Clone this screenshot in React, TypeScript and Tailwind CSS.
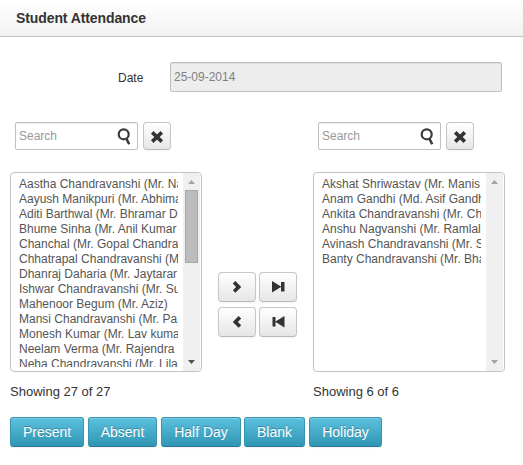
import type { ReactNode } from 'react';

const available = [
  'Aastha Chandravanshi (Mr. Na',
  'Aayush Manikpuri (Mr. Abhima',
  'Aditi Barthwal (Mr. Bhramar D',
  'Bhume Sinha (Mr. Anil Kumar',
  'Chanchal (Mr. Gopal Chandra',
  'Chhatrapal Chandravanshi (M',
  'Dhanraj Daharia (Mr. Jaytarar',
  'Ishwar Chandravanshi (Mr. Su',
  'Mahenoor Begum (Mr. Aziz)',
  'Mansi Chandravanshi (Mr. Pa',
  'Monesh Kumar (Mr. Lav kuma',
  'Neelam Verma (Mr. Rajendra',
  'Neha Chandravanshi (Mr. Lila',
];

const selected = [
  'Akshat Shriwastav (Mr. Manis',
  'Anam Gandhi (Md. Asif Gandh',
  'Ankita Chandravanshi (Mr. Ch',
  'Anshu Nagvanshi (Mr. Ramlal',
  'Avinash Chandravanshi (Mr. S',
  'Banty Chandravanshi (Mr. Bha',
];

const actions = [
  { label: 'Present', width: 'w-[74px] mr-1' },
  { label: 'Absent', width: 'w-[69px] mr-1' },
  { label: 'Half Day', width: 'w-[80px] mr-[3px]' },
  { label: 'Blank', width: 'w-[61px] mr-1' },
  { label: 'Holiday', width: 'w-[73px]' },
];

function IconButton({ className, label, children }: { className: string; label: string; children: ReactNode }) {
  return (
    <button
      aria-label={label}
      className={`flex items-center justify-center rounded-[4px] border border-[#c6c6c6] border-b-[#b8b8b8] bg-linear-to-b from-white to-[#e6e6e6] shadow-[0_1px_2px_rgba(0,0,0,0.05)] ${className}`}
    >
      {children}
    </button>
  );
}

function SearchRow() {
  return (
    <div className="ml-[5px] flex gap-[5px]">
      <div className="flex h-7 w-[123px] items-center justify-between rounded-[2px] border border-[#c0c0c0] bg-white pr-[5px] pl-[3px] text-[12px] text-[#999] shadow-[inset_0_1px_1px_rgba(0,0,0,0.075)]">
        <span>Search</span>
        <svg width="16" height="18" viewBox="0 0 16 18" fill="none" stroke="#3a3a3a" className="mt-px">
          <circle cx="7.7" cy="6.3" r="5" strokeWidth="2.2" />
          <path d="M10.2 10.4 L13.2 16.3" strokeWidth="2.5" />
        </svg>
      </div>
      <IconButton className="h-7 w-7" label="Clear">
        <svg width="14" height="14" viewBox="0 0 14 14" fill="none" stroke="#333" strokeWidth="3.6" className="mt-px">
          <path d="M2.2 2.4 L11.8 11.6 M11.8 2.4 L2.2 11.6" />
        </svg>
      </IconButton>
    </div>
  );
}

function ListBox({ names, scrollable }: { names: string[]; scrollable: boolean }) {
  return (
    <div className="mt-[22px] flex h-[200px] w-48 overflow-hidden rounded-[4px] border border-[#c3c3c3] bg-white pr-px">
      <ul className="my-1 ml-2 h-[190px] w-[159px] shrink-0 overflow-hidden text-[12px] leading-[15px] whitespace-nowrap text-[#555]">
        {names.map((name) => (
          <li key={name}>{name}</li>
        ))}
      </ul>
      <div className="ml-[5px] flex w-[17px] shrink-0 flex-col items-center bg-[#f0f0f0]">
        <svg width="7" height="4" viewBox="0 0 7 4" fill="#a3a3a3" className="mt-[7px] shrink-0">
          <path d="M0 4 L3.5 0 L7 4 Z" />
        </svg>
        <div className="w-[13px] flex-1 pt-[6px]">
          {scrollable && <div className="h-[73px] border border-[#a8a8a8] bg-[#bcbcbc]" />}
        </div>
        <svg width="7" height="4" viewBox="0 0 7 4" fill={scrollable ? '#505050' : '#a3a3a3'} className="mb-[7px] shrink-0">
          <path d="M0 0 L7 0 L3.5 4 Z" />
        </svg>
      </div>
    </div>
  );
}

function Column({ names, count, scrollable }: { names: string[]; count: number; scrollable: boolean }) {
  return (
    <div className="w-48">
      <SearchRow />
      <ListBox names={names} scrollable={scrollable} />
      <p className="mt-[10px] text-[13px] leading-5 text-[#333]">
        Showing {count} of {count}
      </p>
    </div>
  );
}

export default function App() {
  return (
    <main className="h-[465px] w-[523px] overflow-hidden bg-white font-['Liberation_Sans',Arial,sans-serif] text-[#333]">
      <header className="flex h-[37px] items-center border-b border-[#c3c3c3] bg-linear-to-b from-white to-[#f2f2f2] pl-4">
        <h1 className="text-[14px] leading-5 font-bold tracking-[-0.1px]">Student Attendance</h1>
      </header>
      <div className="mt-[25px] flex h-[30px] items-center text-[12px]">
        <span className="ml-[118px] w-[52px] pt-[2px]">Date</span>
        <div className="flex h-[30px] w-[332px] items-center rounded-[2px] border border-[#c0c0c0] bg-[#ededed] pl-[3px] text-[#808080] shadow-[inset_0_1px_1px_rgba(0,0,0,0.075)]">
          25-09-2014
        </div>
      </div>
      <section className="mt-[30px] ml-[10px] flex">
        <Column names={available} count={27} scrollable />
        <div className="mt-[150px] ml-4 grid h-[65px] grid-cols-2 gap-x-[3px] gap-y-[5px]">
          <IconButton className="h-[30px] w-[38px]" label="Add">
            <svg width="10" height="12" viewBox="0 0 10 12" fill="#333" className="-ml-px">
              <path d="M3.4 0 L9.2 5.9 L3.4 11.8 L0.8 9.3 L4.1 5.9 L0.8 2.5 Z" />
            </svg>
          </IconButton>
          <IconButton className="h-[30px] w-[38px]" label="Add all">
            <svg width="13" height="12" viewBox="0 0 13 12" fill="#333">
              <path d="M0 0 L9 5.5 V1 H12.5 V10.5 H9 V6 L0 11.5 Z" />
            </svg>
          </IconButton>
          <IconButton className="h-[30px] w-[38px]" label="Remove">
            <svg width="10" height="12" viewBox="0 0 10 12" fill="#333" className="-ml-px">
              <path d="M6.6 0 L0.8 5.9 L6.6 11.8 L9.2 9.3 L5.9 5.9 L9.2 2.5 Z" />
            </svg>
          </IconButton>
          <IconButton className="h-[30px] w-[38px]" label="Remove all">
            <svg width="13" height="12" viewBox="0 0 13 12" fill="#333">
              <path d="M12.5 0 L3.5 5.5 V1 H0.5 V10.5 H3.5 V6 L12.5 11.5 Z" />
            </svg>
          </IconButton>
        </div>
        <div className="ml-4">
          <Column names={selected} count={6} scrollable={false} />
        </div>
      </section>
      <footer className="mt-[15px] ml-[10px] flex">
        {actions.map(({ label, width }) => (
          <button
            key={label}
            className={`h-[30px] rounded-[3px] border border-[#3a94b0] border-b-[#287b96] bg-linear-to-b from-[#5bc0de] to-[#2f96b4] text-center text-[14px] leading-[28px] whitespace-nowrap text-white shadow-[inset_0_1px_0_rgba(255,255,255,0.2),0_1px_2px_rgba(0,0,0,0.05)] [text-shadow:0_-1px_0_rgba(0,0,0,0.25)] ${width}`}
          >
            {label}
          </button>
        ))}
      </footer>
    </main>
  );
}
